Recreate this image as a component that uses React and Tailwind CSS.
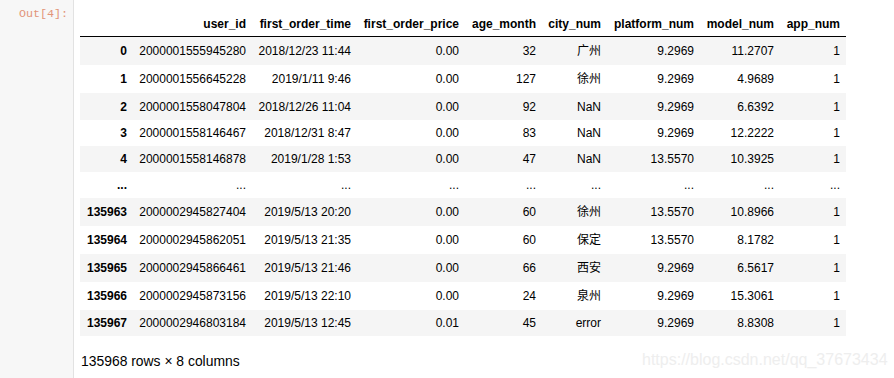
import React from 'react';

const cols = [
  { key: 'idx', w: 'w-[53px]' },
  { key: 'user_id', w: 'w-[119px]' },
  { key: 'first_order_time', w: 'w-[105px]' },
  { key: 'first_order_price', w: 'w-[108px]' },
  { key: 'age_month', w: 'w-[77px]' },
  { key: 'city_num', w: 'w-[65px]' },
  { key: 'platform_num', w: 'w-[93px]' },
  { key: 'model_num', w: 'w-[80px]' },
  { key: 'app_num', w: 'w-[66px]' },
];

const rows = [
  { h: 'h-[28px]', cells: ['0', '2000001555945280', '2018/12/23 11:44', '0.00', '32', '广州', '9.2969', '11.2707', '1'] },
  { h: 'h-[28px]', cells: ['1', '2000001556645228', '2019/1/11 9:46', '0.00', '127', '徐州', '9.2969', '4.9689', '1'] },
  { h: 'h-[27px]', cells: ['2', '2000001558047804', '2018/12/26 11:04', '0.00', '92', 'NaN', '9.2969', '6.6392', '1'] },
  { h: 'h-[26px]', cells: ['3', '2000001558146467', '2018/12/31 8:47', '0.00', '83', 'NaN', '9.2969', '12.2222', '1'] },
  { h: 'h-[26px]', cells: ['4', '2000001558146878', '2019/1/28 1:53', '0.00', '47', 'NaN', '13.5570', '10.3925', '1'] },
  { h: 'h-[26px]', cells: ['...', '...', '...', '...', '...', '...', '...', '...', '...'] },
  { h: 'h-[28px]', cells: ['135963', '2000002945827404', '2019/5/13 20:20', '0.00', '60', '徐州', '13.5570', '10.8966', '1'] },
  { h: 'h-[28px]', cells: ['135964', '2000002945862051', '2019/5/13 21:35', '0.00', '60', '保定', '13.5570', '8.1782', '1'] },
  { h: 'h-[28px]', cells: ['135965', '2000002945866461', '2019/5/13 21:46', '0.00', '66', '西安', '9.2969', '6.5617', '1'] },
  { h: 'h-[28px]', cells: ['135966', '2000002945873156', '2019/5/13 22:10', '0.00', '24', '泉州', '9.2969', '15.3061', '1'] },
  { h: 'h-[26px]', cells: ['135967', '2000002946803184', '2019/5/13 12:45', '0.01', '45', 'error', '9.2969', '8.8308', '1'] },
];

export default function App() {
  return (
    <div
      className="relative flex h-[378px] w-[894px] overflow-hidden bg-white text-black"
      style={{ fontFamily: '"Liberation Sans", Arial, "Noto Sans CJK SC", sans-serif' }}
    >
      {/* prompt gutter */}
      <div className="w-[74px] shrink-0 border-r border-[#e2e2e2] bg-[#f7f7f7] pr-[5px] text-right">
        <span
          className="text-[11.7px] leading-[16px] text-[#e29479]"
          style={{ fontFamily: '"Liberation Mono", monospace' }}
        >
          Out[4]:
        </span>
      </div>

      {/* output area */}
      <div className="flex flex-col pl-[6px] pt-[10px] text-[12px]">
        <div className="flex h-[27px] items-center border-b border-black pt-[1px] font-bold">
          {cols.map((c) => (
            <div key={c.key} className={`${c.w} pr-[6px] text-right`}>
              {c.key === 'idx' ? '' : c.key}
            </div>
          ))}
        </div>

        {rows.map((r, i) => (
          <div
            key={i}
            className={`flex items-center ${r.h} ${i % 2 === 0 && r.cells[0] !== '...' ? 'bg-[#f5f5f5]' : 'bg-white'}`}
          >
            {r.cells.map((v, j) => (
              <div
                key={j}
                className={`${cols[j].w} pr-[6px] text-right ${j === 0 ? 'font-bold' : ''}`}
              >
                {v}
              </div>
            ))}
          </div>
        ))}

        <div className="mt-[17px] pl-[1px] text-[13.9px] leading-[16px]">135968 rows × 8 columns</div>
      </div>

      {/* watermark */}
      <div className="absolute left-[642px] top-[351px] text-[16px] leading-[18px] text-[#eeeeee]">
        https://blog.csdn.net/qq_37673434
      </div>
    </div>
  );
}
